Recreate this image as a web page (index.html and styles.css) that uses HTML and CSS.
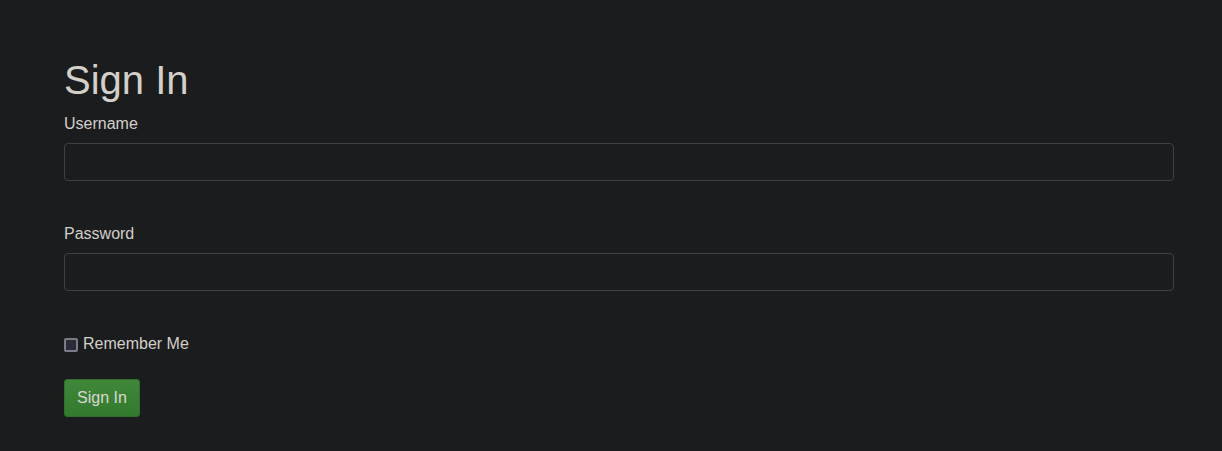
FILE: index.html
```html
<!DOCTYPE html>
<html lang="en">
<head>
    <meta charset="UTF-8">
    <meta name="viewport" content="width=device-width, initial-scale=1.0">
    <title>Sign In</title>
    <link rel="stylesheet" href="styles.css">
</head>
<body>
    <div class="container">
        <h1>Sign In</h1>
        <form>
            <div class="form-group">
                <label for="username">Username</label>
                <input type="text" id="username" class="form-control">
            </div>
            <div class="form-group">
                <label for="password">Password</label>
                <input type="password" id="password" class="form-control">
            </div>
            <div class="check-row">
                <input type="checkbox" id="remember" class="check">
                <label for="remember">Remember Me</label>
            </div>
            <button type="submit" class="btn-success">Sign In</button>
        </form>
    </div>
</body>
</html>
```

FILE: styles.css
```css
body {
    font-family: "Liberation Sans", Arial, sans-serif;
    font-size: 16px;
    line-height: 1.5;
    background-color: #1b1c1e;
    color: #d3cfc9;
    margin: 0;
}
.container {
    padding: 56px 48px 0 64px;
}
h1 {
    font-size: 40px;
    font-weight: 400;
    line-height: 1.2;
    margin: 0 0 8px;
}
label {
    display: inline-block;
    margin-bottom: 7px;
}
.form-group {
    margin-bottom: 41px;
}
.form-control {
    display: block;
    width: 100%;
    height: 38px;
    box-sizing: border-box;
    padding: 6px 12px;
    background-color: #1b1c1e;
    color: #d3cfc9;
    border: 1px solid #3e4245;
    border-radius: 4px;
    font: inherit;
}
.check-row {
    display: flex;
    align-items: center;
    gap: 5px;
    margin-bottom: 23px;
}
.check-row label {
    margin: 0;
}
.check {
    appearance: none;
    width: 14px;
    height: 14px;
    margin: 1px 0 0 0;
    border: 2px solid #7b7d86;
    border-radius: 2px;
    background-color: #2c2c38;
    box-sizing: border-box;
}
.btn-success {
    height: 38px;
    padding: 6px 12px;
    font: inherit;
    color: #d8d8d2;
    background: linear-gradient(#40873a, #347a2e);
    border: 1px solid #316f2c;
    border-radius: 3px;
    cursor: pointer;
}
```
